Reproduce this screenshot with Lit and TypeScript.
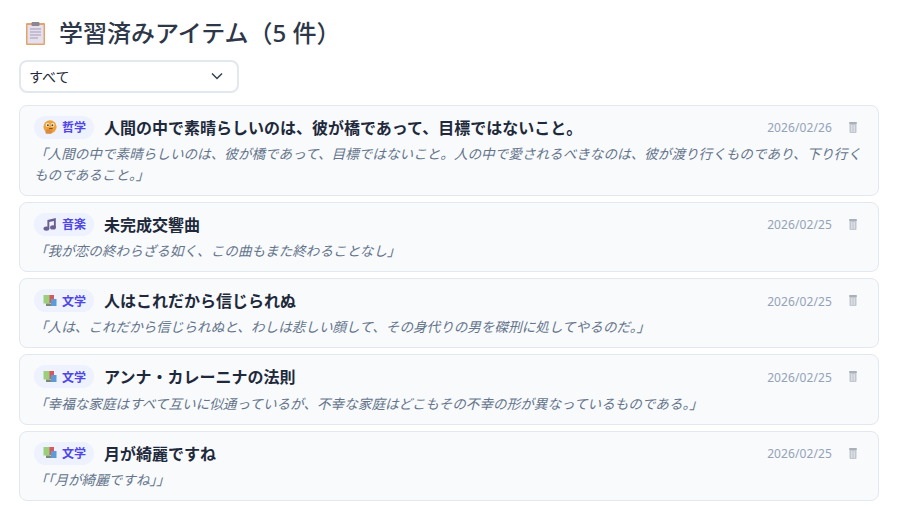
import { LitElement, css, html, svg } from "lit";
import { customElement } from "lit/decorators.js";

type Item = {
  cat: "phil" | "music" | "lit";
  label: string;
  title: string;
  quote: string;
  date: string;
};

const items: Item[] = [
  {
    cat: "phil",
    label: "哲学",
    title: "人間の中で素晴らしいのは、彼が橋であって、目標ではないこと。",
    quote:
      "「人間の中で素晴らしいのは、彼が橋であって、目標ではないこと。人の中で愛されるべきなのは、彼が渡り行くものであり、下り行くものであること。」",
    date: "2026/02/26",
  },
  {
    cat: "music",
    label: "音楽",
    title: "未完成交響曲",
    quote: "「我が恋の終わらざる如く、この曲もまた終わることなし」",
    date: "2026/02/25",
  },
  {
    cat: "lit",
    label: "文学",
    title: "人はこれだから信じられぬ",
    quote: "「人は、これだから信じられぬと、わしは悲しい顔して、その身代りの男を磔刑に処してやるのだ。」",
    date: "2026/02/25",
  },
  {
    cat: "lit",
    label: "文学",
    title: "アンナ・カレーニナの法則",
    quote: "「幸福な家庭はすべて互いに似通っているが、不幸な家庭はどこもその不幸の形が異なっているものである。」",
    date: "2026/02/25",
  },
  {
    cat: "lit",
    label: "文学",
    title: "月が綺麗ですね",
    quote: "「「月が綺麗ですね」」",
    date: "2026/02/25",
  },
];

const catIcons = {
  phil: svg`<circle cx="7" cy="6.8" r="6.6" fill="#eda23a"/><ellipse cx="4.6" cy="5" rx="1.9" ry="2" fill="#fff0d0"/><ellipse cx="9.6" cy="5" rx="1.9" ry="2" fill="#fff0d0"/><circle cx="4.9" cy="5.3" r="1" fill="#5b4030"/><circle cx="9.4" cy="5.3" r="1" fill="#5b4030"/><path d="M6 8.6h3.6" stroke="#8a4b20" stroke-width="1.1"/><path d="M2.8 13.8c-.8-2.6.4-4.6 2.6-4.8l3.8 1.6-1 3.2z" fill="#dc8a40"/>`,
  music: svg`<path d="M4.4 3 12.8 1v9.2h-1.9V3.9L6.3 5v6.8H4.4z" fill="#6a5f8f"/><ellipse cx="3.4" cy="11.6" rx="2.9" ry="2.2" fill="#6a5f8f"/><ellipse cx="10" cy="10.4" rx="2.9" ry="2.2" fill="#6a5f8f"/>`,
  lit: svg`<rect x="0.5" y="1" width="6.5" height="8.5" fill="#9ccf7a"/><rect x="6.5" y="1" width="4.5" height="8" fill="#d9555f"/><rect x="8" y="5" width="5.5" height="7" fill="#5b9bd8"/><rect x="3" y="9.5" width="5" height="2.5" fill="#7a8a70"/>`,
};

@customElement("app-root")
export class AppRoot extends LitElement {
  static styles = css`
    :host {
      display: block;
      box-sizing: border-box;
      height: 507px;
      overflow: hidden;
      padding: 15px 27px 0 19px;
      background: #fff;
      font-family: "Noto Sans", "Noto Sans CJK JP", sans-serif;
      color: #1e293b;
    }
    h2 {
      display: flex;
      align-items: center;
      gap: 12px;
      margin: 0 0 9px 4px;
      height: 36px;
      font-size: 24px;
      font-weight: 500;
      line-height: 36px;
      color: #2d3748;
    }
    .select {
      display: flex;
      align-items: center;
      justify-content: space-between;
      box-sizing: border-box;
      width: 220px;
      height: 33px;
      padding: 0 14px 1px 8px;
      border: 2px solid #e2e8f0;
      border-radius: 8px;
      font-size: 14px;
      color: #1e293b;
    }
    .list {
      display: flex;
      flex-direction: column;
      gap: 6px;
      margin-top: 11.8px;
    }
    .card {
      box-sizing: border-box;
      padding: 9.6px 14px;
      border: 1px solid #e2e8f0;
      border-radius: 8px;
      background: #f8fafc;
    }
    .head {
      display: flex;
      align-items: center;
      gap: 10px;
      height: 24px;
      margin-bottom: 4.8px;
    }
    .badge {
      display: flex;
      align-items: center;
      gap: 5px;
      flex: none;
      height: 23px;
      padding: 0 8px 0 9px;
      border-radius: 12px;
      background: #eef2ff;
      color: #4f46e5;
      font-size: 12px;
      font-weight: 700;
    }
    .title {
      flex: 1;
      padding-bottom: 1px;
      font-size: 16px;
      font-weight: 700;
      color: #1e293b;
    }
    .date {
      padding-top: 1px;
      font-size: 12px;
      letter-spacing: 0.1px;
      color: #94a3b8;
    }
    .trash {
      display: block;
      margin: 0 7px;
    }
    .quote {
      margin: 0;
      font-size: 13.6px;
      line-height: 20.4px;
      font-style: italic;
      color: #64748b;
    }
  `;

  render() {
    return html`
      <h2>
        <svg width="24" height="24" viewBox="0 0 24 24">
          <rect x="3" y="2" width="19" height="22" rx="1" fill="#e2a468" />
          <rect x="4.5" y="4" width="16" height="18.5" fill="#e6e0ee" />
          <rect x="8.5" y="1" width="8" height="4" rx="1" fill="#8b8790" />
          <path d="M7 8h11M7 11h11M7 14h11M7 17h8" stroke="#a39bb5" stroke-width="1" />
        </svg>
        学習済みアイテム（5 件）
      </h2>
      <div class="select">
        <span>すべて</span>
        <svg width="12" height="8" viewBox="0 0 12 8">
          <path d="M1 1.5l5 5 5-5" fill="none" stroke="#334155" stroke-width="1.5" />
        </svg>
      </div>
      <div class="list">
        ${items.map(
          (it) => html`
            <div class="card">
              <div class="head">
                <span class="badge">
                  <svg width="14" height="14" viewBox="0 0 14 14">${catIcons[it.cat]}</svg>
                  ${it.label}
                </span>
                <span class="title">${it.title}</span>
                <span class="date">${it.date}</span>
                <svg class="trash" width="8" height="11" viewBox="0 0 8 11">
                  <path d="M.5 1h7v9a1 1 0 0 1-1 1h-5a1 1 0 0 1-1-1z" fill="#c2c7cf" />
                  <rect x="0" y="0" width="8" height="2" rx="1" fill="#aab0b8" />
                  <path d="M2.8 3v7M5.2 3v7" stroke="#e6e9ed" stroke-width="1" />
                </svg>
              </div>
              <p class="quote">${it.quote}</p>
            </div>
          `
        )}
      </div>
    `;
  }
}
